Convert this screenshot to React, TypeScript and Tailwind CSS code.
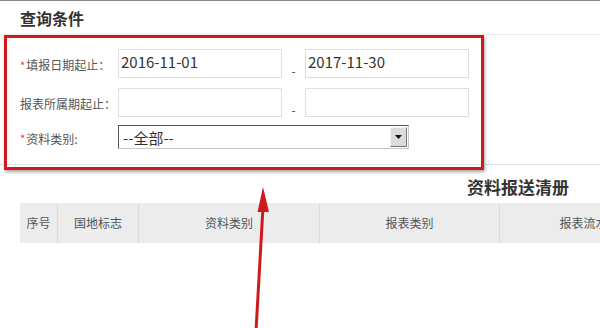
import React from 'react';

const font = { fontFamily: '"Noto Sans CJK SC", "Microsoft YaHei", sans-serif' };

// Label cell for a form row
const Label: React.FC<{ text: string; required?: boolean }> = ({ text, required }) => (
  <div className="w-[98px] shrink-0 flex items-center text-[12px] text-[#555] pt-[3px]">
    {required && <span className="text-[#e23a3a] text-[11px] mr-[1px]">*</span>}
    <span>{text}</span>
  </div>
);

const TextBox: React.FC<{ value?: string }> = ({ value }) => (
  <div className="w-[164px] h-full border border-[#dedede] bg-white px-[2px] pt-[1px] text-[15px] leading-[22px] text-[#333]">
    {value}
  </div>
);

const Dash = () => (
  <div className="w-[23px] h-full flex items-end justify-center pb-[1px] text-[12px] leading-[12px] text-[#444]">-</div>
);

const columns = [
  { title: '序号', w: 'w-[38px]' },
  { title: '国地标志', w: 'w-[81px]' },
  { title: '资料类别', w: 'w-[181px]' },
  { title: '报表类别', w: 'w-[180px]' },
  { title: '报表流水号', w: 'w-[180px]' },
];

export default function App() {
  return (
    <div className="relative w-[600px] h-[328px] overflow-hidden bg-white border-t border-[#8a8a8a]" style={font}>
      {/* 查询条件 */}
      <div className="h-[34px] flex items-center pl-[20px] border-b border-[#ebebeb] text-[16px] font-bold text-[#333]">
        查询条件
      </div>

      <div className="pl-[20px] pt-[14px] pb-[15px] border-b border-[#e2e2e2] flex flex-col">
        <div className="flex h-[29px]">
          <Label text="填报日期起止：" required />
          <TextBox value="2016-11-01" />
          <Dash />
          <TextBox value="2017-11-30" />
        </div>
        <div className="flex h-[29px] mt-[10px]">
          <Label text="报表所属期起止：" />
          <TextBox />
          <Dash />
          <TextBox />
        </div>
        <div className="flex h-[24px] mt-[8px]">
          <Label text="资料类别:" required />
          <div className="w-[291px] h-full flex items-center bg-white border border-[#c8c8c8] border-t-[#555] border-l-[#555] pl-[4px] pr-[1px]">
            <span className="flex-1 text-[15px] text-[#333] leading-none">--全部--</span>
            <div className="w-[17px] h-[20px] bg-[#dcdcdc] border border-[#f4f4f4] border-r-[#777] border-b-[#777] flex items-center justify-center">
              <svg width="7" height="4" viewBox="0 0 7 4"><polygon points="0,0 7,0 3.5,4" fill="#111" /></svg>
            </div>
          </div>
        </div>
      </div>

      {/* 资料报送清册 */}
      <div className="h-[38px] flex items-center pl-[467px] pt-[6px] text-[17px] font-bold text-[#333]">
        资料报送清册
      </div>

      <div className="ml-[20px] flex h-[40px] bg-[#ececec] w-max">
        {columns.map((c) => (
          <div
            key={c.title}
            className={`${c.w} shrink-0 h-full flex items-center justify-center text-[12px] text-[#555] border-r border-[#dadada]`}
          >
            {c.title}
          </div>
        ))}
      </div>

      {/* annotation box */}
      <div className="absolute left-[4px] top-[34px] w-[480px] h-[135px] border-[3px] border-[#d1181d] shadow-[1px_2px_3px_rgba(0,0,0,0.35)]" />

      {/* annotation arrow */}
      <svg className="absolute left-0 top-0" width="600" height="328" viewBox="0 0 600 328">
        <line x1="256" y1="330" x2="263" y2="206" stroke="#cf1a1d" strokeWidth="3" />
        <polygon points="263,186 257.5,211 269,211" fill="#cf1a1d" />
      </svg>
    </div>
  );
}
